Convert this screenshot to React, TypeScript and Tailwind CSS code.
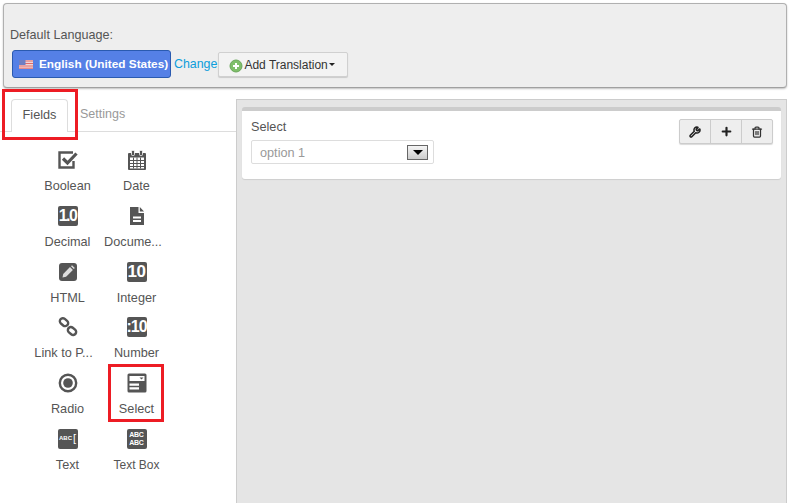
import type { ReactNode } from "react";
import { Wrench, Plus, Trash2 } from "lucide-react";

const ICON = "#555555";

function TextTile({ children, className }: { children: ReactNode; className: string }) {
  return (
    <div className={`flex h-[20px] w-[20px] items-center justify-center overflow-hidden rounded-[2px] bg-[#555555] font-bold text-white ${className}`}>
      {children}
    </div>
  );
}

function BooleanIcon() {
  return (
    <svg width="20" height="20" viewBox="0 0 20 20" fill="none">
      <path d="M15.5 11v6.5H1.5v-15H15" stroke={ICON} strokeWidth="2.4" />
      <path d="M5 8.5l4.5 4.5L18.5 3.5" stroke={ICON} strokeWidth="3.2" />
    </svg>
  );
}

function DateIcon() {
  return (
    <svg width="20" height="20" viewBox="0 0 20 20">
      <rect x="1" y="3" width="18" height="17" rx="1" fill={ICON} />
      <rect x="4.5" y="0.5" width="3" height="5" rx="1" fill={ICON} stroke="#fff" strokeWidth="0.8" />
      <rect x="12.5" y="0.5" width="3" height="5" rx="1" fill={ICON} stroke="#fff" strokeWidth="0.8" />
      <path d="M3 7.5h14v11H3z" fill="#fff" />
      <path d="M3 10.5h14M3 13.5h14M3 16.5h14M6.5 7.5v11M10 7.5v11M13.5 7.5v11" stroke={ICON} strokeWidth="1" />
    </svg>
  );
}

function DocumentIcon() {
  return (
    <svg width="20" height="20" viewBox="0 0 20 20">
      <path d="M3 1h8.5v6H17v12H3z" fill={ICON} />
      <path d="M12.8 1l4.2 4.5h-4.2z" fill={ICON} />
      <path d="M6 10.5h8v2H6zM6 14h8v2H6z" fill="#fff" />
    </svg>
  );
}

function HtmlIcon() {
  return (
    <svg width="20" height="20" viewBox="0 0 20 20">
      <rect x="1" y="1" width="18" height="18" rx="3" fill={ICON} />
      <path d="M4.5 15.5l.7-3.6 6.8-6.8 2.9 2.9-6.8 6.8z" fill="#ddd" />
      <path d="M13 4.2l1-1 2.8 2.8-1 1z" fill="#ddd" />
    </svg>
  );
}

function LinkIcon() {
  return (
    <svg width="20" height="20" viewBox="0 0 20 20" fill="none">
      <rect x="1.5" y="2.2" width="9" height="6" rx="3" transform="rotate(40 6 5.2)" stroke={ICON} strokeWidth="2.4" />
      <rect x="9.5" y="11" width="9" height="6" rx="3" transform="rotate(40 14 14)" stroke={ICON} strokeWidth="2.4" />
    </svg>
  );
}

function RadioIcon() {
  return (
    <svg width="20" height="20" viewBox="0 0 20 20" fill="none">
      <circle cx="10" cy="10" r="8.2" stroke={ICON} strokeWidth="2.4" />
      <circle cx="10" cy="10" r="4.8" fill={ICON} />
    </svg>
  );
}

function SelectIcon() {
  return (
    <svg width="20" height="20" viewBox="0 0 20 20">
      <rect x="0.5" y="0.5" width="19" height="19" rx="1.5" fill={ICON} />
      <path d="M2.5 3h15v5h-15zM2.5 10.5h9.5v2.2h-9.5zM2.5 14.2h9.5v2.2h-9.5z" fill="#fff" />
      <path d="M12.5 4.5h4l-2 2z" fill={ICON} />
    </svg>
  );
}

const FIELDS: { label: string; icon: ReactNode; boxed?: boolean; labelClass?: string }[] = [
  { label: "Boolean", icon: <BooleanIcon /> },
  { label: "Date", icon: <DateIcon /> },
  { label: "Decimal", icon: <TextTile className="text-[16px] tracking-[-1.5px]">1.0</TextTile> },
  { label: "Docume...", icon: <DocumentIcon />, labelClass: "mr-[7px]" },
  { label: "HTML", icon: <HtmlIcon /> },
  { label: "Integer", icon: <TextTile className="text-[17px] tracking-[-0.5px]">10</TextTile> },
  { label: "Link to P...", icon: <LinkIcon />, labelClass: "mr-[8px]" },
  { label: "Number", icon: <TextTile className="text-[16px] tracking-[-1px]">:10</TextTile> },
  { label: "Radio", icon: <RadioIcon /> },
  { label: "Select", icon: <SelectIcon />, boxed: true },
  {
    label: "Text",
    icon: (
      <TextTile className="text-[6px]">
        ABC<span className="ml-[1px] text-[11px] font-normal leading-[11px]">[</span>
      </TextTile>
    ),
  },
  {
    label: "Text Box",
    icon: <TextTile className="text-center text-[7px] leading-[8px] tracking-[-0.3px]">ABC<br />ABC</TextTile>,
    labelClass: "text-[12px]",
  },
];

export default function App() {
  return (
    <div className="flex h-[503px] w-[792px] flex-col overflow-hidden bg-white font-['Liberation_Sans',Arial,sans-serif] text-[12.7px] text-[#555555]">
      {/* default language bar */}
      <div className="mx-[3px] mt-[3px] h-[85px] w-[784px] shrink-0 rounded-[4px] border border-[#b0b0b0] border-b-[#a0a0a0] bg-[#eeeeee] pl-[6px] pt-[23px] shadow-[0_1px_2px_rgba(0,0,0,0.25)]">
        <div className="h-[17px] text-[12.6px] leading-[17px]">Default Language:</div>
        <div className="mt-[6px] flex items-center">
          <button className="ml-[2px] flex h-[28px] w-[159px] items-center whitespace-nowrap rounded-[3px] border border-[#2a5ab0] bg-[#5580e6] pl-[6px] pt-[1px] text-[11.8px] font-bold text-white">
            <svg width="14" height="9" viewBox="0 0 14 9" className="mr-[6px] shrink-0">
              <rect width="14" height="9" fill="#f0d8d8" />
              <path d="M0 1h14M0 3.5h14M0 6h14M0 8.2h14" stroke="#e06a6a" strokeWidth="1" />
              <rect width="6.5" height="5" fill="#6d7fc4" />
            </svg>
            English (United States)
          </button>
          <span className="ml-[3px] text-[12.4px] text-[#0d9ddb]">Change</span>
          <button className="ml-[1px] flex h-[25px] w-[130px] items-center rounded-[2px] border border-[#d0d0d0] bg-[#f3f3f3] pl-[10px] pt-[1px] text-[12px] text-[#333333] shadow-[0_1px_1px_rgba(0,0,0,0.15)]">
            <svg width="14" height="14" viewBox="0 0 14 14" className="mr-[1px] mt-[2px]">
              <circle cx="7" cy="7" r="6" fill="#7fbf6a" stroke="#6aa65a" />
              <path d="M4 7h6M7 4v6" stroke="#fff" strokeWidth="2" />
            </svg>
            Add Translation
            <span className="ml-[1px] h-0 w-0 border-x-[3px] border-t-[3px] border-x-transparent border-t-[#222222]" />
          </button>
        </div>
      </div>

      <div className="flex min-h-0 flex-1">
        {/* field palette */}
        <div className="w-[236px] shrink-0">
          <div className="relative mt-[11px] flex h-[33px] border-b border-[#dddddd] pl-[11px]">
            <div className="h-[33px] w-[57px] rounded-t-[4px] border border-b-0 border-[#dddddd] bg-white text-center leading-[31px] text-[#555555]">
              Fields
            </div>
            <div className="ml-[12px] text-[12.5px] leading-[31px] text-[#999999]">Settings</div>
            <div className="absolute left-[2px] top-[-10px] h-[51px] w-[76px] border-[3px] border-[#ed1c24]" />
          </div>
          <div className="ml-[33px] mt-[18px] grid w-[138px] grid-cols-2">
            {FIELDS.map((f) => (
              <div key={f.label} className="relative flex h-[55.8px] flex-col items-center">
                <div className="flex h-[20px] items-center justify-center">{f.icon}</div>
                <div className={`mt-[9px] whitespace-nowrap leading-[14px] ${f.labelClass ?? ""}`}>{f.label}</div>
                {f.boxed && (
                  <div className="absolute left-[6px] top-[-9px] h-[58px] w-[56px] border-[3px] border-[#ed1c24]" />
                )}
              </div>
            ))}
          </div>
        </div>

        {/* form canvas */}
        <div className="ml-0 mt-[11px] w-[551px] shrink-0 border border-b-0 border-[#cccccc] bg-[#e5e5e5] pl-[5px] pr-[5px] pt-[7px]">
          <div className="flex h-[72px] rounded-[3px] border-t-[4px] border-[#cccccc] bg-white pl-[9px] pr-[8px] shadow-[0_1px_1px_rgba(0,0,0,0.1)]">
            <div className="flex-1">
              <div className="mt-[9px] leading-[14px]">Select</div>
              <div className="mt-[6px] flex h-[24px] w-[183px] items-center justify-between rounded-[2px] border border-[#dddddd] pl-[8px] pr-[5px] text-[#999999]">
                <span className="mt-[3px]">option 1</span>
                <span className="flex h-[15px] w-[21px] items-center justify-center border border-[#666666] bg-[linear-gradient(#f4f4f4,#cccccc)]">
                  <span className="h-0 w-0 border-x-[5px] border-t-[5px] border-x-transparent border-t-black" />
                </span>
              </div>
            </div>
            <div className="mt-[8px] flex h-[25px] w-[94px] rounded-[2px] border border-[#cccccc] bg-[#eeeeee] shadow-[0_1px_1px_rgba(0,0,0,0.15)]">
              <div className="flex flex-1 items-center justify-center border-r border-[#cccccc]">
                <Wrench size={12} color="#222" strokeWidth={3} />
              </div>
              <div className="flex flex-1 items-center justify-center border-r border-[#cccccc]">
                <Plus size={13} color="#222" strokeWidth={4} />
              </div>
              <div className="flex flex-1 items-center justify-center">
                <Trash2 size={12} color="#333" strokeWidth={2.5} />
              </div>
            </div>
          </div>
        </div>
      </div>
    </div>
  );
}
